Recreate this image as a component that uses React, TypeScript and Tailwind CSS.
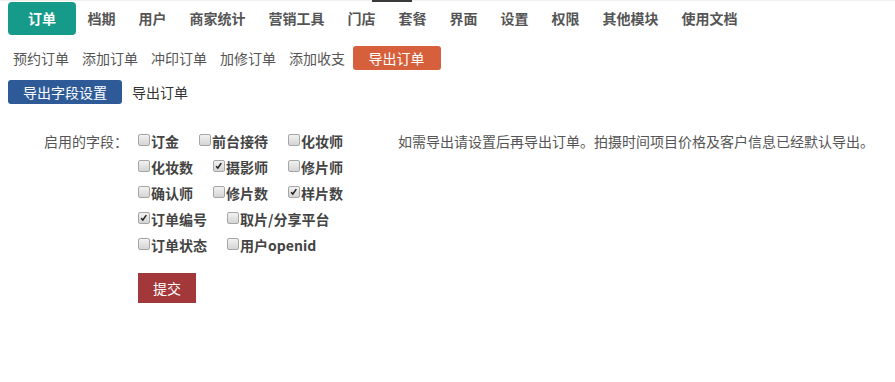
import React from 'react';

const NAV = ['档期', '用户', '商家统计', '营销工具', '门店', '套餐', '界面', '设置', '权限', '其他模块', '使用文档'];
const SUB = ['预约订单', '添加订单', '冲印订单', '加修订单', '添加收支'];

const ROWS: { label: string; checked?: boolean }[][] = [
  [{ label: '订金' }, { label: '前台接待' }, { label: '化妆师' }],
  [{ label: '化妆数' }, { label: '摄影师', checked: true }, { label: '修片师' }],
  [{ label: '确认师' }, { label: '修片数' }, { label: '样片数', checked: true }],
  [{ label: '订单编号', checked: true }, { label: '取片/分享平台' }],
  [{ label: '订单状态' }, { label: '用户openid' }],
];

const Box = ({ checked }: { checked?: boolean }) => (
  <span className="relative inline-block w-[12px] h-[12px] mt-[-2px] rounded-[2px] border border-[#a6a6a6] bg-gradient-to-b from-[#f2f2f2] to-[#d4d4d4]">
    {checked && (
      <svg viewBox="0 0 12 12" className="absolute left-[0px] top-[0px] w-[10px] h-[10px]">
        <path d="M2.5 6.2 L4.6 8.4 L8.8 2.6" fill="none" stroke="#222" strokeWidth="1.8" />
      </svg>
    )}
  </span>
);

export default function App() {
  return (
    <div
      className="relative w-[895px] h-[382px] bg-white border-t border-[#f0f0f0] text-[14px] text-[#555]"
      style={{ fontFamily: '"Microsoft YaHei", "Noto Sans CJK SC", sans-serif' }}
    >
      <div className="absolute left-[372px] top-[-1px] w-[40px] h-[2px] bg-[#3a3a3a]" />

      {/* top nav */}
      <div className="flex items-center h-[34px] pl-2">
        <div className="h-[33px] px-5 flex items-center rounded-[4px] bg-[#169a89] text-white font-bold">订单</div>
        <div className="flex">
          {NAV.map((n) => (
            <span key={n} className="px-[11.5px] font-bold text-[#555] leading-[20px]">
              {n}
            </span>
          ))}
        </div>
      </div>

      {/* sub nav */}
      <div className="mt-[11px] flex items-center h-[24px] pl-[6.5px]">
        {SUB.map((s) => (
          <span key={s} className="px-[6.5px] leading-[20px]">
            {s}
          </span>
        ))}
        <span className="ml-[1px] h-[24px] px-4 flex items-center rounded-[3px] bg-[#d6603c] text-white">导出订单</span>
      </div>

      {/* tabs */}
      <div className="mt-[10px] flex items-center h-[24px] pl-2">
        <span className="h-[24px] px-[15px] flex items-center rounded-[3px] bg-[#2e5b98] text-white">导出字段设置</span>
        <span className="ml-[10px] text-[#333]">导出订单</span>
      </div>

      {/* form */}
      <div className="mt-[24px] flex">
        <div className="w-[128px] text-right h-[26px] leading-[26px]">启用的字段：</div>
        <div className="ml-[10px] w-[260px]">
          {ROWS.map((row, i) => (
            <div key={i} className="flex h-[26px] items-center">
              {row.map((c) => (
                <label key={c.label} className="flex items-center mr-[20px] font-bold text-[#444]">
                  <Box checked={c.checked} />
                  <span className="ml-[1px]">{c.label}</span>
                </label>
              ))}
            </div>
          ))}
          <button className="mt-[15px] w-[58px] h-[30px] bg-[#a2383a] text-white">提交</button>
        </div>
        <div className="h-[26px] leading-[26px]">如需导出请设置后再导出订单。拍摄时间项目价格及客户信息已经默认导出。</div>
      </div>
    </div>
  );
}
